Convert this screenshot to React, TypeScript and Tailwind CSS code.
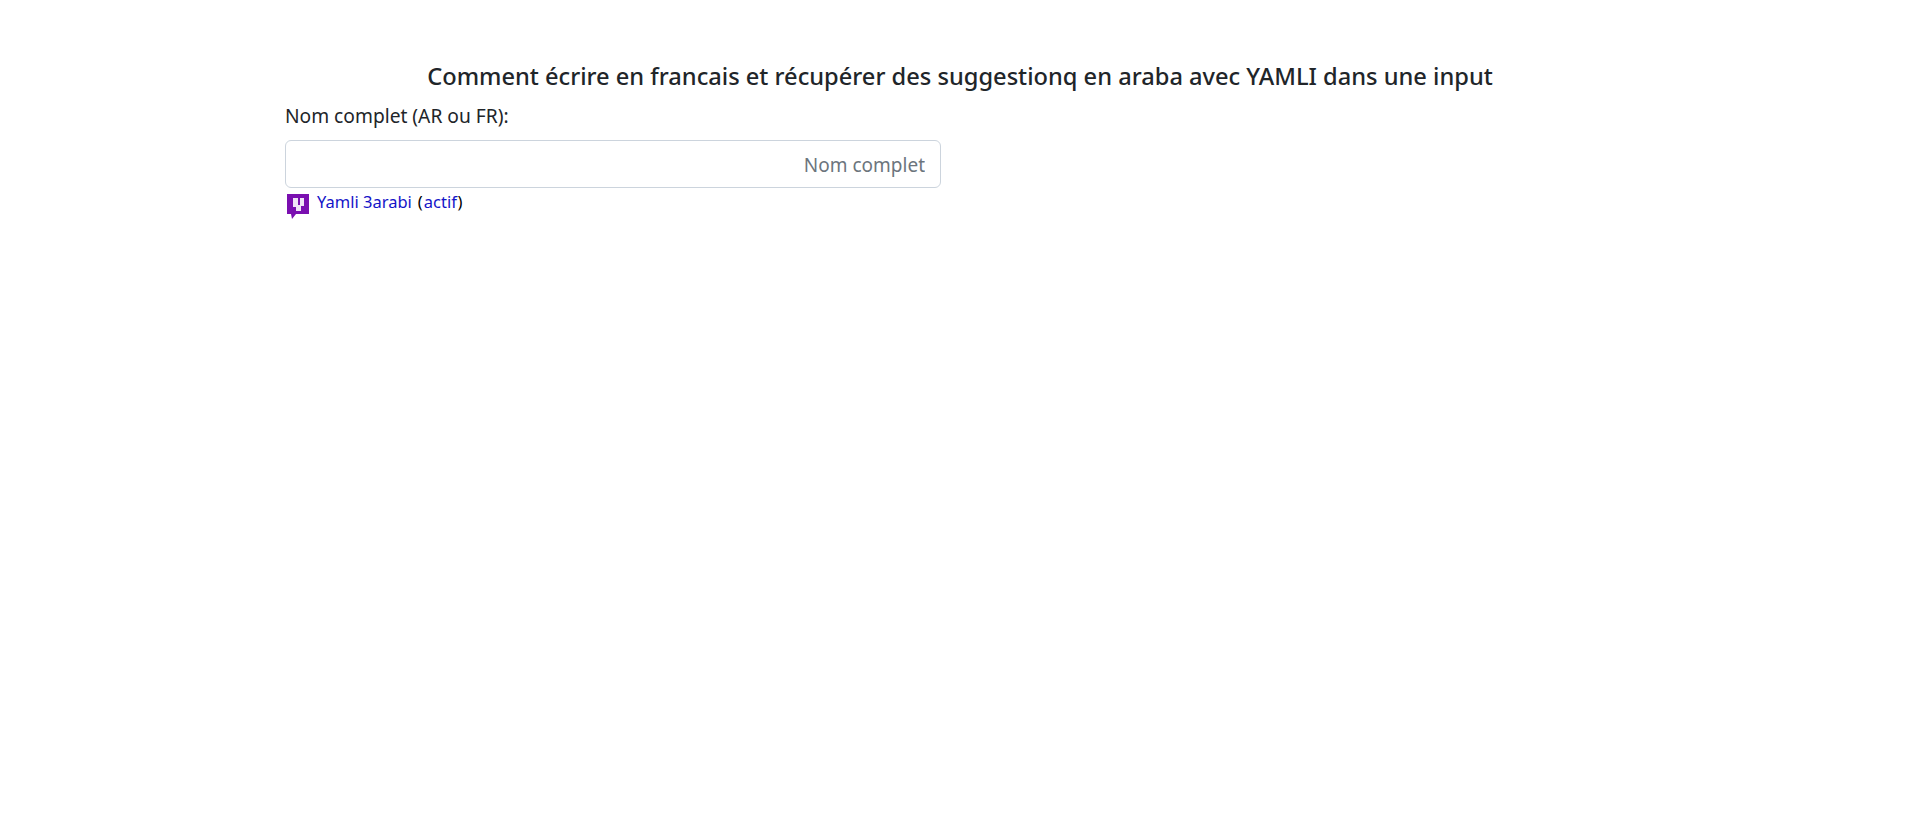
export default function App() {
  return (
    <div className="min-h-[832px] bg-white font-['Noto_Sans',sans-serif] text-[#212529]">
      <div className="mx-auto w-[1350px] pt-[62px]">
        <h4 className="text-center text-[23.65px] leading-[29px] font-medium">
          Comment écrire en francais et récupérer des suggestionq en araba avec YAMLI dans une input
        </h4>
        <div className="w-[656px]">
          <label className="mt-[10px] mb-[9px] block text-[19.2px] leading-[30px]">Nom complet (AR ou FR):</label>
          <input
            type="text"
            dir="rtl"
            placeholder="Nom complet"
            className="block h-[48px] w-full rounded-[6px] border border-[#ccd4dd] px-[15px] pt-[2px] text-[19px] placeholder:text-[#6c757d]"
          />
          <div className="flex h-[29px] items-center text-[16.5px] text-black">
            <svg width="22" height="25" viewBox="0 0 22 25" className="mt-[7px] mr-[8px] ml-[2px]">
              <path d="M0 0H22V20H9L5 25L4 20H0Z" fill="#7a0fb0" />
              <path d="M6 4H11V11H13V4H17V12H14V17H9V13H6Z" fill="#efe4f6" />
            </svg>
            <a className="text-[#1414c8]">Yamli 3arabi</a>
            <span className="ml-[6px]">
              (<a className="ml-[1px] text-[#1414c8]">actif</a>)
            </span>
          </div>
        </div>
      </div>
    </div>
  );
}
